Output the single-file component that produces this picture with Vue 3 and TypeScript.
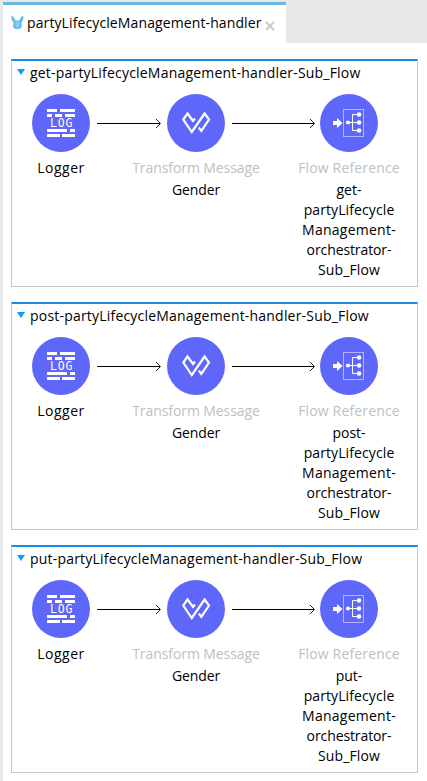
<script setup lang="ts">
interface Flow {
  verb: string
}

interface LabelLine {
  text: string
  fit: string
}

const flows: Flow[] = [{ verb: 'get' }, { verb: 'post' }, { verb: 'put' }]
const referenceLines: LabelLine[] = [
  { text: 'partyLifecycle', fit: 'fit-slight' },
  { text: 'Management-', fit: 'fit-wide' },
  { text: 'orchestrator-', fit: 'fit-tight' },
  { text: 'Sub_Flow', fit: 'fit-slight' },
]
</script>

<template>
  <div class="editor">
    <header class="tabs">
      <div class="tab">
        <svg class="file-icon" width="13" height="15" viewBox="0 0 13 15">
          <path d="M.6 .5C2.8 1.8 3.8 3.8 4.6 5.6H8.2C9.1 3.8 10 1.8 12.2 .5C12.8 3 12.2 5.8 10.4 8L11 11.5L8.9 14H4L1.8 11.5L2.6 8C.6 5.8.1 3 .6 .5Z" fill="#62bfe8" />
          <path d="M1.2 1.5C2.4 3 3.3 5.2 4.1 7L3.1 8C1.4 6 .7 4 1.2 1.5Z" fill="#9ab9c8" />
          <path d="M4.2 7H8.7L8.2 12H4.8Z" fill="#7fd0f2" />
        </svg>
        <span class="tab-title">partyLifecycleManagement-handler</span>
        <svg class="close" width="10" height="10" viewBox="0 0 10 10">
          <path d="M1 1L9 9M9 1L1 9" stroke="#c9c9c9" stroke-width="2" fill="none" />
        </svg>
      </div>
    </header>
    <main class="canvas">
      <section v-for="flow in flows" :key="flow.verb" class="flow">
        <h2 class="flow-head">
          <svg class="caret" width="8" height="6" viewBox="0 0 8 6"><path d="M0 0H8L4 6Z" fill="#0d9bff" /></svg>
          <span class="flow-title">{{ flow.verb }}-partyLifecycleManagement-handler-Sub_Flow</span>
        </h2>
        <div class="steps">
          <div class="step first">
            <svg class="disc" width="58" height="58" viewBox="0 0 58 58">
              <circle cx="29" cy="29" r="29" fill="#5f66fa" />
              <path d="M15 16.5H25M28 16.5H43M15 21.5H20M23 21.5H30M33 21.5H43M15 36.5H35M38 36.5H43M15 41.5H28M30 41.5H43" stroke="#fff" stroke-width="3" />
              <text x="29.6" y="33" text-anchor="middle" class="log">LOG</text>
            </svg>
            <span class="name logger">Logger</span>
          </div>
          <svg class="arrow" width="64" height="11" viewBox="0 0 64 11">
            <path d="M0 5.5H63" stroke="#000" /><path d="M59 1L63.5 5.5L59 10" stroke="#222" fill="none" />
          </svg>
          <div class="step second">
            <svg class="disc" width="58" height="58" viewBox="0 0 58 58">
              <circle cx="29" cy="29" r="29" fill="#5f66fa" />
              <path d="M28 24.5L26 27L20.5 19.5L16.3 25.5L24.8 38L37.6 19.5L42 25.5L34.3 36.8L31.8 33.5" stroke="#fff" stroke-width="2.2" fill="none" />
            </svg>
            <span class="name kind transform">Transform Message</span>
            <span class="name sub gender">Gender</span>
          </div>
          <svg class="arrow long" width="83" height="11" viewBox="0 0 83 11">
            <path d="M0 5.5H82" stroke="#000" /><path d="M78 1L82.5 5.5L78 10" stroke="#222" fill="none" />
          </svg>
          <div class="step third">
            <svg class="disc" width="58" height="58" viewBox="0 0 58 58">
              <circle cx="29" cy="29" r="29" fill="#5f66fa" />
              <rect x="23.5" y="15.5" width="20" height="27" stroke="#b0b4fd" fill="none" />
              <path d="M13 27H17V24L22.5 29L17 34V31H13Z" fill="#fff" />
              <path d="M28 28.5H39M38 20.5H32.5V36.5H38" stroke="#fff" fill="none" />
              <g fill="#fff">
                <circle cx="28" cy="28.5" r="2.1" /><circle cx="39" cy="20.5" r="2.3" />
                <circle cx="39" cy="28.5" r="2.3" /><circle cx="39" cy="36.5" r="2.3" />
              </g>
            </svg>
            <span class="name kind reference">Flow Reference</span>
            <span class="name sub">{{ flow.verb }}-</span>
            <span v-for="line in referenceLines" :key="line.text" class="name" :class="line.fit">{{ line.text }}</span>
          </div>
        </div>
      </section>
    </main>
  </div>
</template>

<style>
body {
  margin: 0;
  background: #fff;
}
</style>

<style scoped>
.editor {
  box-sizing: border-box;
  height: 781px;
  overflow: hidden;
  border-left: 3px solid #e7e8ea;
  background: #fff;
  color: #000;
  font-family: "Open Sans", "Noto Sans", sans-serif;
  font-size: 14px;
}
.tabs {
  height: 43px;
  padding-top: 2px;
  box-sizing: border-box;
  background: #e7e8ea;
}
.tab {
  display: flex;
  align-items: flex-start;
  box-sizing: border-box;
  width: 283px;
  height: 41px;
  padding-left: 8px;
  border-top: 3px solid #68b8df;
  background: #fff;
}
.file-icon {
  margin-top: 10px;
}
.tab-title {
  width: 235px;
  margin: 8px 0 0 3px;
  letter-spacing: 0.11px;
  line-height: 20px;
  white-space: nowrap;
}
.close {
  margin: 16px 0 0 3px;
}
.canvas {
  display: flex;
  flex-direction: column;
  gap: 15px;
  padding: 16px 9px 0 8px;
}
.flow {
  box-sizing: border-box;
  height: 228px;
  border: 1px solid #c8c8c8;
  border-top: 2px solid #1f8ae6;
}
.flow-head {
  display: flex;
  align-items: center;
  gap: 5px;
  height: 20px;
  margin: 2px 0 11px;
  padding-left: 5px;
  font-size: 14px;
  font-weight: 400;
  letter-spacing: 0.2px;
  line-height: 20px;
  white-space: nowrap;
}
.caret {
  margin-top: -3px;
}
.steps {
  display: flex;
  align-items: flex-start;
  padding-left: 13px;
}
.step {
  display: flex;
  flex: none;
  flex-direction: column;
  align-items: center;
}
.first {
  width: 72px;
}
.second {
  width: 70px;
}
.third {
  width: 68px;
}
.arrow {
  flex: none;
  margin-top: 24px;
}
.long {
  margin-left: 1px;
}
.name {
  line-height: 20px;
  white-space: nowrap;
}
.disc {
  flex: none;
  margin-bottom: 6px;
}
.kind {
  color: #c0c0c0;
}
.sub {
  margin-top: 2px;
}
.logger {
  letter-spacing: 0.5px;
}
.transform {
  letter-spacing: -0.08px;
}
.gender {
  letter-spacing: -0.1px;
}
.reference {
  letter-spacing: 0.16px;
}
.fit-slight {
  letter-spacing: 0.1px;
}
.fit-wide {
  letter-spacing: 0.25px;
}
.fit-tight {
  letter-spacing: -0.1px;
}
.log {
  fill: #fff;
  font-family: "DejaVu Sans Mono", monospace;
  font-size: 11.5px;
  letter-spacing: 0.8px;
}
</style>
